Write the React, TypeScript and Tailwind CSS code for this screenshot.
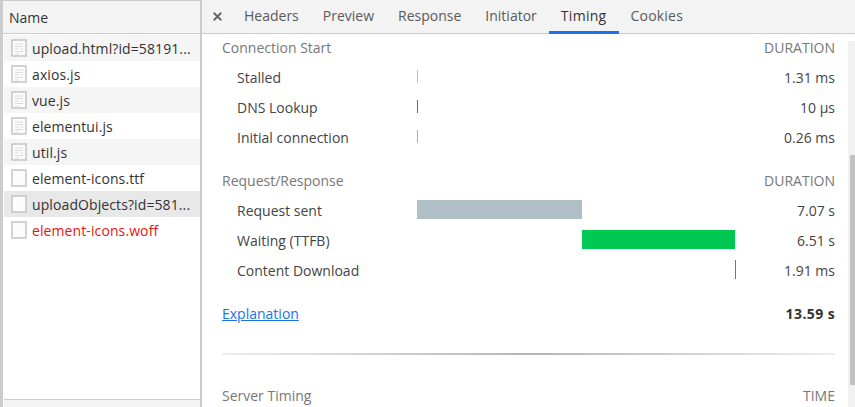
import React from 'react';
import { X } from 'lucide-react';

const FileIcon = ({ lines }: { lines?: boolean }) => (
  <svg width="16" height="18" viewBox="0 0 16 18" className="shrink-0">
    <rect x="1" y="1" width="14" height="16" fill="#fcfcfc" stroke="#c4c4c4" strokeWidth="1.5" />
    {lines && (
      <path d="M4 5h8M4 7.5h8M4 10h4M9.500 10h2.500M4 12.500h8M4 15h4" stroke="#dcdcdc" strokeWidth="1" fill="none" />
    )}
  </svg>
);

const FileRow = ({ name, lines, bg, red }: { name: string; lines?: boolean; bg?: string; red?: boolean }) => (
  <div className={`flex items-center h-[26px] pl-[7px] ${bg ?? 'bg-white'}`}>
    <FileIcon lines={lines} />
    <span className={`ml-[5px] text-[14px] whitespace-nowrap tracking-[0.1px] ${red ? 'text-[#ee1111]' : 'text-[#333]'}`}>{name}</span>
  </div>
);

const PhaseRow = ({ label, time, bar }: { label: string; time: string; bar: React.ReactNode }) => (
  <div className="flex items-center h-[30px]">
    <div className="w-[195px] pl-[15px] text-[14px] text-[#444]">{label}</div>
    <div className="flex-1 h-[19px] self-start mt-[5px] flex items-center">{bar}</div>
    <div className="w-[99px] text-right text-[14px] text-[#444]">{time}</div>
  </div>
);

const SectionHead = ({ title, right }: { title: string; right: string }) => (
  <div className="flex justify-between items-center h-[24px] text-[14px] text-[#777]">
    <span>{title}</span>
    <span>{right}</span>
  </div>
);

const tabs = ['Headers', 'Preview', 'Response', 'Initiator', 'Timing', 'Cookies'];

const App: React.FC = () => {
  return (
    <div className="flex w-[855px] h-[407px] overflow-hidden bg-white font-['Open_Sans',sans-serif]">
      <aside className="w-[202px] shrink-0 flex flex-col border-l-[3px] border-r-[2px] border-[#cccccc]">
        <div className="h-[34px] shrink-0 flex items-center pl-[6px] text-[14px] text-[#333] bg-[#f3f3f3] border-t border-b border-[#cccccc]">Name</div>
        <div className="flex-1 flex flex-col pl-[1px] pt-[1px]">
          <FileRow name="upload.html?id=58191..." lines bg="bg-[#f5f5f5]" />
          <FileRow name="axios.js" lines />
          <FileRow name="vue.js" lines bg="bg-[#f5f5f5]" />
          <FileRow name="elementui.js" lines />
          <FileRow name="util.js" lines bg="bg-[#f5f5f5]" />
          <FileRow name="element-icons.ttf" />
          <FileRow name="uploadObjects?id=581..." bg="bg-[#e8e8e8]" />
          <FileRow name="element-icons.woff" red />
        </div>
        <div className="h-[8px] shrink-0 bg-[#f3f3f3] border-t border-[#cccccc] ml-[1px]" />
      </aside>
      <main className="flex-1 flex flex-col min-w-0">
        <div className="h-[34px] shrink-0 flex bg-[#f3f3f3] border-b border-[#cccccc]">
          <div className="w-[30px] flex items-center justify-center pl-[1px]">
            <X size={13} strokeWidth={3.5} className="text-[#666]" />
          </div>
          {tabs.map((t) => (
            <div
              key={t}
              className={`flex items-center px-[12px] -mb-px text-[14px] border-b-[3px] ${t === 'Timing' ? 'border-[#1a73e8] text-[#333] tracking-[0.3px]' : 'border-transparent text-[#5a5a5a]'} ${t === 'Cookies' ? 'tracking-[0.2px]' : ''}`}
            >
              {t}
            </div>
          ))}
        </div>
        <div className="flex-1 flex min-h-0">
          <div className="flex-1 min-w-0 pl-[20px] pr-[13px]">
            <div className="mt-[1px] mb-[3px]">
              <SectionHead title="Connection Start" right="DURATION" />
            </div>
            <PhaseRow label="Stalled" time="1.31 ms" bar={<div className="w-[1px] h-[13px] bg-[#b0bec5]" />} />
            <PhaseRow label="DNS Lookup" time="10 µs" bar={<div className="w-[1px] h-[13px] bg-[#009688]" />} />
            <PhaseRow label="Initial connection" time="0.26 ms" bar={<div className="w-[1px] h-[13px] bg-[#f9a825]" />} />
            <div className="mt-[16px] mb-[3px]">
              <SectionHead title="Request/Response" right="DURATION" />
            </div>
            <PhaseRow label="Request sent" time="7.07 s" bar={<div className="w-[165px] h-[19px] bg-[#b0bec5]" />} />
            <PhaseRow label="Waiting (TTFB)" time="6.51 s" bar={<div className="ml-[165px] w-[153px] h-[19px] bg-[#00c853]" />} />
            <PhaseRow label="Content Download" time="1.91 ms" bar={<div className="ml-[318px] w-[1px] h-[19px] bg-[#039be5]" />} />
            <div className="flex justify-between items-center mt-[15px] h-[26px] text-[14px]">
              <a className="text-[#1a73e8] underline">Explanation</a>
              <span className="font-bold tracking-[0.4px] text-[#333]">13.59 s</span>
            </div>
            <div className="mt-[27px] h-[2px] bg-[linear-gradient(to_right,#eeeeee,#b5b5b5,#eeeeee)]" />
            <div className="mt-[28px]">
              <SectionHead title="Server Timing" right="TIME" />
            </div>
          </div>
          <div className="w-[7px] shrink-0 flex flex-col items-end bg-[#f1f1f1] mt-[7px]">
            <div className="h-[114px]" />
            <div className="w-[5px] h-[230px] bg-[#c1c1c1]" />
          </div>
        </div>
      </main>
    </div>
  );
};

export default App;
